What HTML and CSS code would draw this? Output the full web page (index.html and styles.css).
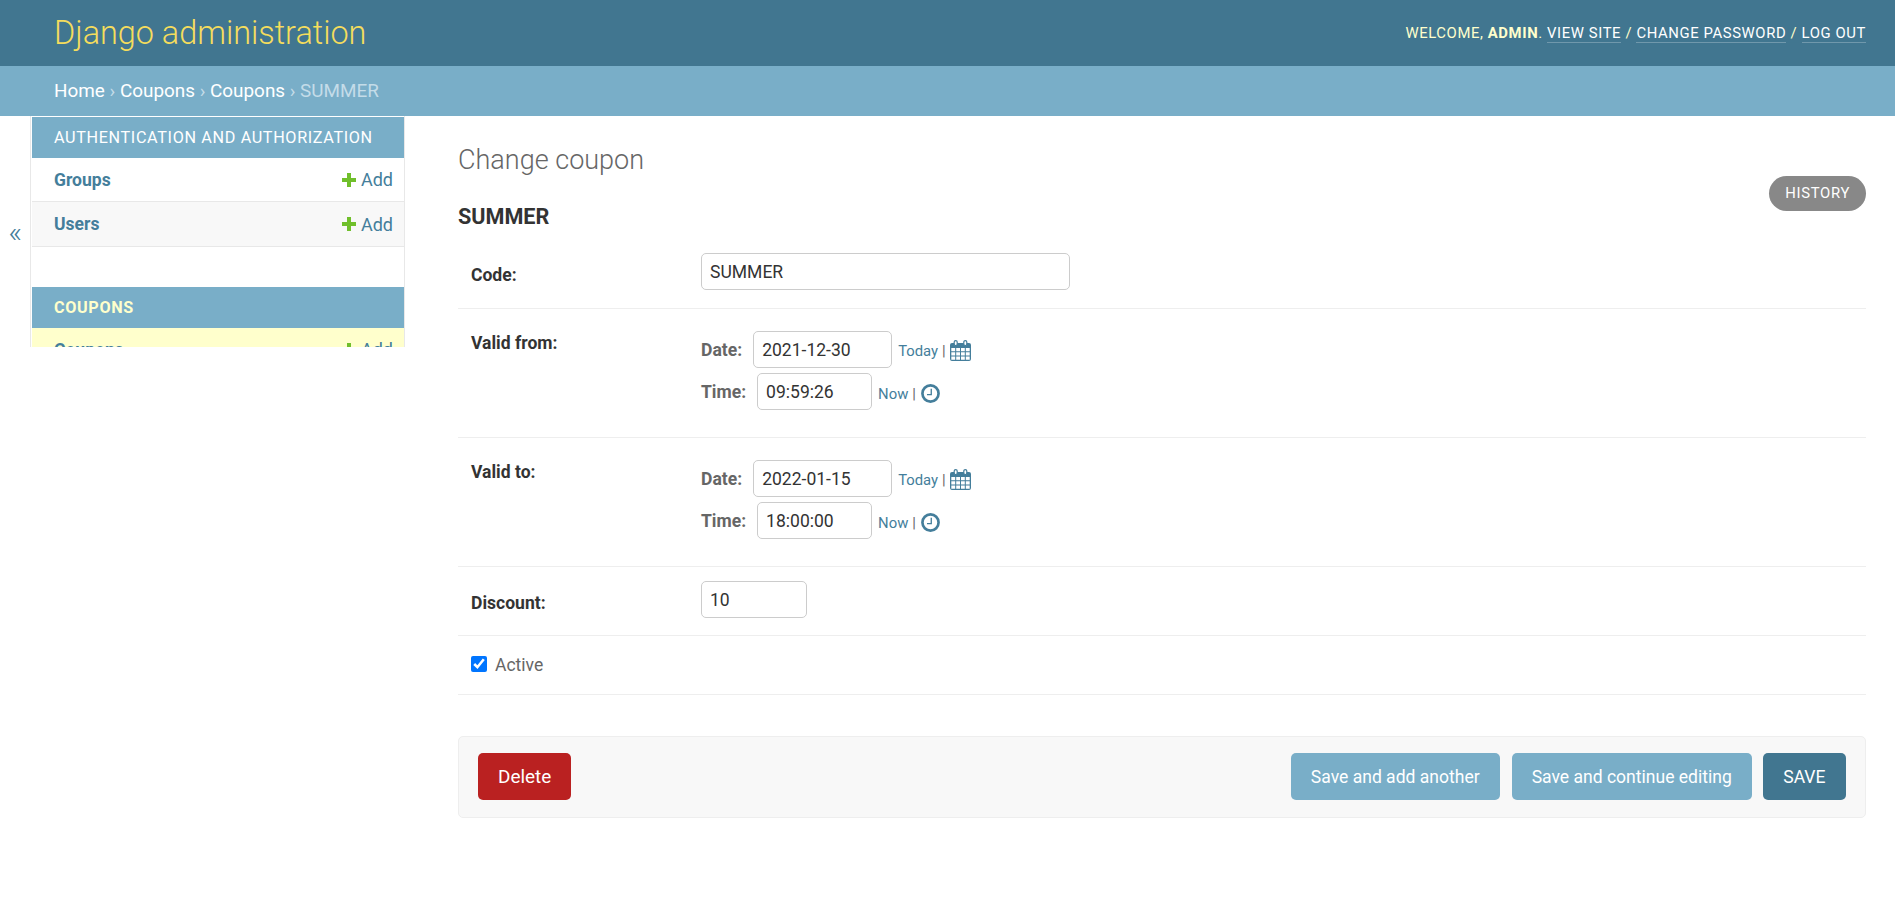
FILE: index.html
```html
<!DOCTYPE html>
<html>
  <head>
    <meta charset="UTF-8" />
    <meta name="viewport" content="width=device-width, initial-scale=1.0" />
    <title>Change coupon | Django site admin</title>
    <link rel="stylesheet" href="styles.css">
  </head>
  <body>
    <header class="header">
      <div class="branding">Django administration</div>
      <div class="user-tools">
        Welcome, <strong>admin</strong>. <a href="#">View site</a> / <a href="#">Change password</a> / <a href="#">Log out</a>
      </div>
    </header>
    <div class="breadcrumbs">
      <a href="#">Home</a> <span class="sep">›</span> <a href="#">Coupons</a> <span class="sep">›</span> <a href="#">Coupons</a> <span class="sep">›</span> SUMMER
    </div>

    <div class="page">
      <div class="side">
        <button class="toggle" type="button">«</button>
        <nav class="sidebar">
          <div class="module">
            <div class="caption">Authentication and Authorization</div>
            <div class="nav-row">
              <a class="model" href="#">Groups</a>
              <a class="add" href="#">
                <svg class="plus" viewBox="0 0 14 14"><path d="M5 0h4v5h5v4H9v5H5V9H0V5h5z" /></svg>
                Add
              </a>
            </div>
            <div class="nav-row alt">
              <a class="model" href="#">Users</a>
              <a class="add" href="#">
                <svg class="plus" viewBox="0 0 14 14"><path d="M5 0h4v5h5v4H9v5H5V9H0V5h5z" /></svg>
                Add
              </a>
            </div>
          </div>
          <div class="module">
            <div class="caption current">Coupons</div>
            <div class="nav-row selected">
              <a class="model" href="#">Coupons</a>
              <a class="add" href="#">
                <svg class="plus" viewBox="0 0 14 14"><path d="M5 0h4v5h5v4H9v5H5V9H0V5h5z" /></svg>
                Add
              </a>
            </div>
          </div>
        </nav>
      </div>

      <main class="content">
        <div class="title-row">
          <h1>Change coupon</h1>
          <a class="history" href="#">History</a>
        </div>
        <h2>SUMMER</h2>

        <form>
          <div class="form-row code-row">
            <label class="field-label">Code:</label>
            <input class="text code-input" type="text" value="SUMMER" />
          </div>

          <div class="form-row datetime-row">
            <label class="field-label">Valid from:</label>
            <div class="datetime">
              <div class="dt-line">
                <span class="dt-label">Date:</span>
                <input class="text date-input" type="text" value="2021-12-30" />
                <span class="shortcuts">
                  <a href="#">Today</a> <span class="bar">|</span>
                  <svg class="icon-cal" viewBox="0 0 21 21"><use href="#cal" /></svg>
                </span>
              </div>
              <div class="dt-line">
                <span class="dt-label">Time:</span>
                <input class="text time-input" type="text" value="09:59:26" />
                <span class="shortcuts now">
                  <a href="#">Now</a> <span class="bar">|</span>
                  <svg class="icon-clock" viewBox="0 0 20 20"><use href="#clock" /></svg>
                </span>
              </div>
            </div>
          </div>

          <div class="form-row datetime-row">
            <label class="field-label">Valid to:</label>
            <div class="datetime">
              <div class="dt-line">
                <span class="dt-label">Date:</span>
                <input class="text date-input" type="text" value="2022-01-15" />
                <span class="shortcuts">
                  <a href="#">Today</a> <span class="bar">|</span>
                  <svg class="icon-cal" viewBox="0 0 21 21"><use href="#cal" /></svg>
                </span>
              </div>
              <div class="dt-line">
                <span class="dt-label">Time:</span>
                <input class="text time-input" type="text" value="18:00:00" />
                <span class="shortcuts now">
                  <a href="#">Now</a> <span class="bar">|</span>
                  <svg class="icon-clock" viewBox="0 0 20 20"><use href="#clock" /></svg>
                </span>
              </div>
            </div>
          </div>

          <div class="form-row">
            <label class="field-label">Discount:</label>
            <input class="text discount-input" type="text" value="10" />
          </div>

          <div class="form-row check-row">
            <input class="check" type="checkbox" checked />
            <label class="check-label">Active</label>
          </div>

          <div class="submit-row">
            <a class="btn delete" href="#">Delete</a>
            <div class="submit-right">
              <a class="btn" href="#">Save and add another</a>
              <a class="btn" href="#">Save and continue editing</a>
              <a class="btn default" href="#">SAVE</a>
            </div>
          </div>
        </form>
      </main>
    </div>

    <svg class="defs" width="0" height="0">
      <defs>
        <g id="cal">
          <path fill="#447e9b" fill-rule="evenodd" d="M2 3h17a2 2 0 0 1 2 2v14a2 2 0 0 1-2 2H2a2 2 0 0 1-2-2V5a2 2 0 0 1 2-2zM1.300 8v3.200h3.900V8zm4.900 0v3.200h3.800V8zm4.800 0v3.200h3.800V8zm4.800 0v3.200h3.900V8zM1.300 12.200v3.300h3.900v-3.300zm4.900 0v3.300h3.800v-3.300zm4.800 0v3.300h3.800v-3.300zm4.800 0v3.300h3.900v-3.300zM1.300 16.500v3.200h3.900v-3.200zm4.900 0v3.200h3.800v-3.200zm4.800 0v3.200h3.800v-3.200zm4.800 0v3.200h3.900v-3.200z" />
          <rect x="4.200" y="0.600" width="3" height="5" rx="1.500" fill="#fff" stroke="#447e9b" stroke-width="1.200" />
          <rect x="13.800" y="0.600" width="3" height="5" rx="1.500" fill="#fff" stroke="#447e9b" stroke-width="1.200" />
        </g>
        <g id="clock">
          <circle cx="10" cy="10" r="8.500" fill="none" stroke="#447e9b" stroke-width="2.800" />
          <path d="M10.800 5v6.200H6.300" fill="none" stroke="#447e9b" stroke-width="1.400" />
        </g>
      </defs>
    </svg>
  </body>
</html>
```

FILE: styles.css
```css
* {
  box-sizing: border-box;
}
body {
  margin: 0;
  font-family: Roboto, "Liberation Sans", sans-serif;
  font-size: 17.55px;
  color: #333;
  background: #fff;
}
a {
  color: #447e9b;
  text-decoration: none;
}
.header {
  display: flex;
  justify-content: space-between;
  align-items: center;
  height: 66px;
  padding: 0 29px 0 54px;
  background: #417690;
  color: #ffc;
}
.branding {
  font-size: 32.4px;
  font-weight: 300;
  color: #f5dd5d;
}
.user-tools {
  font-size: 14.85px;
  letter-spacing: 0.6px;
  text-transform: uppercase;
}
.user-tools a {
  color: #fff;
  border-bottom: 1px solid rgba(255, 255, 255, 0.25);
}
.breadcrumbs {
  height: 50px;
  padding: 0 54px;
  line-height: 50px;
  background: #79aec8;
  color: #c4dce8;
  font-size: 18.9px;
}
.breadcrumbs a {
  color: #fff;
}
.page {
  display: flex;
  align-items: flex-start;
}
.side {
  display: flex;
  flex: 0 0 405px;
  height: 231px;
}
.toggle {
  flex: 0 0 30px;
  padding: 0;
  border: 0;
  background: #fff;
  color: #447e9b;
  font-family: inherit;
  font-size: 30px;
  font-weight: 300;
}
.sidebar {
  flex: 1;
  padding: 1px 0 0 1px;
  overflow: hidden;
  border-left: 1px solid #e8e8e8;
  border-right: 1px solid #e8e8e8;
}
.module {
  margin-bottom: 40px;
}
.caption {
  height: 41px;
  padding: 0 0 0 22px;
  line-height: 41px;
  background: #79aec8;
  color: #fff;
  font-size: 16.2px;
  font-weight: 400;
  letter-spacing: 0.65px;
  text-transform: uppercase;
}
.caption.current {
  color: #ffc;
  font-weight: 700;
}
.nav-row {
  display: flex;
  justify-content: space-between;
  align-items: center;
  height: 44px;
  padding: 0 11px 0 22px;
  border-bottom: 1px solid #e8e8e8;
}
.nav-row.alt {
  height: 45px;
  background: #f8f8f8;
}
.nav-row.selected {
  background: #ffc;
}
.model {
  font-weight: 700;
}
.add {
  display: flex;
  align-items: center;
  gap: 5px;
  font-size: 18px;
}
.plus {
  width: 14px;
  height: 14px;
  fill: #70bf2b;
}
.content {
  flex: 1;
  padding: 0 29px 0 53px;
}
.title-row {
  display: flex;
  justify-content: space-between;
  align-items: flex-start;
}
h1 {
  margin: 28px 0 0;
  font-size: 27px;
  font-weight: 300;
  color: #666;
}
.history {
  margin-top: 60px;
  padding: 0 16px;
  height: 35px;
  line-height: 35px;
  border-radius: 18px;
  background: #888;
  color: #fff;
  font-size: 14.85px;
  letter-spacing: 0.68px;
  text-transform: uppercase;
}
h2 {
  margin: -6px 0 10px;
  font-size: 21.6px;
  line-height: 24px;
  font-weight: 700;
}
.form-row {
  display: flex;
  align-items: flex-start;
  padding: 14px 0 17px 13px;
  border-bottom: 1px solid #eee;
}
.code-row {
  padding-bottom: 18px;
}
.field-label {
  flex: 0 0 230px;
  padding-top: 12px;
  font-weight: 700;
}
.datetime-row .field-label {
  padding-top: 2px;
}
.datetime-row {
  padding-top: 22px;
  padding-bottom: 27px;
}
.text {
  height: 37px;
  padding: 0 8px;
  border: 1px solid #ccc;
  border-radius: 5px;
  font-family: inherit;
  font-size: 17.55px;
  color: #333;
}
.code-input {
  width: 369px;
}
.discount-input {
  width: 106px;
}
.date-input {
  width: 139px;
  margin: 0 6px 0 11px;
}
.time-input {
  width: 115px;
  margin: 0 6px 0 11px;
}
.datetime {
  display: flex;
  flex-direction: column;
  gap: 5px;
}
.dt-line {
  display: flex;
  align-items: center;
}
.dt-label {
  font-weight: 700;
  color: #666;
}
.shortcuts {
  display: flex;
  align-items: center;
  gap: 4px;
  padding-top: 2px;
  font-size: 14.85px;
  color: #666;
}
.shortcuts.now {
  padding-top: 4px;
}
.icon-cal {
  width: 21px;
  height: 21px;
}
.icon-clock {
  width: 19px;
  height: 19px;
  margin-left: 1px;
}
.check-row {
  align-items: center;
  height: 59px;
  padding: 0 0 0 13px;
}
.check {
  width: 16px;
  height: 16px;
  margin: -2px 8px 0 0;
  accent-color: #0075ff;
}
.check-label {
  color: #666;
}
.submit-row {
  display: flex;
  justify-content: space-between;
  margin-top: 41px;
  padding: 16px 19px 17px;
  background: #f8f8f8;
  border: 1px solid #eee;
  border-radius: 5px;
}
.submit-right {
  display: flex;
  gap: 12px;
}
.btn {
  height: 47px;
  padding: 0 20px;
  line-height: 48px;
  border-radius: 5px;
  background: #79aec8;
  color: #fff;
  font-size: 17.55px;
}
.btn.delete {
  font-size: 18.9px;
  line-height: 47px;
  background: #ba2121;
}
.btn.default {
  margin-left: -1px;
  padding: 0 20.5px;
  background: #417690;
}
.defs {
  position: absolute;
}
```
